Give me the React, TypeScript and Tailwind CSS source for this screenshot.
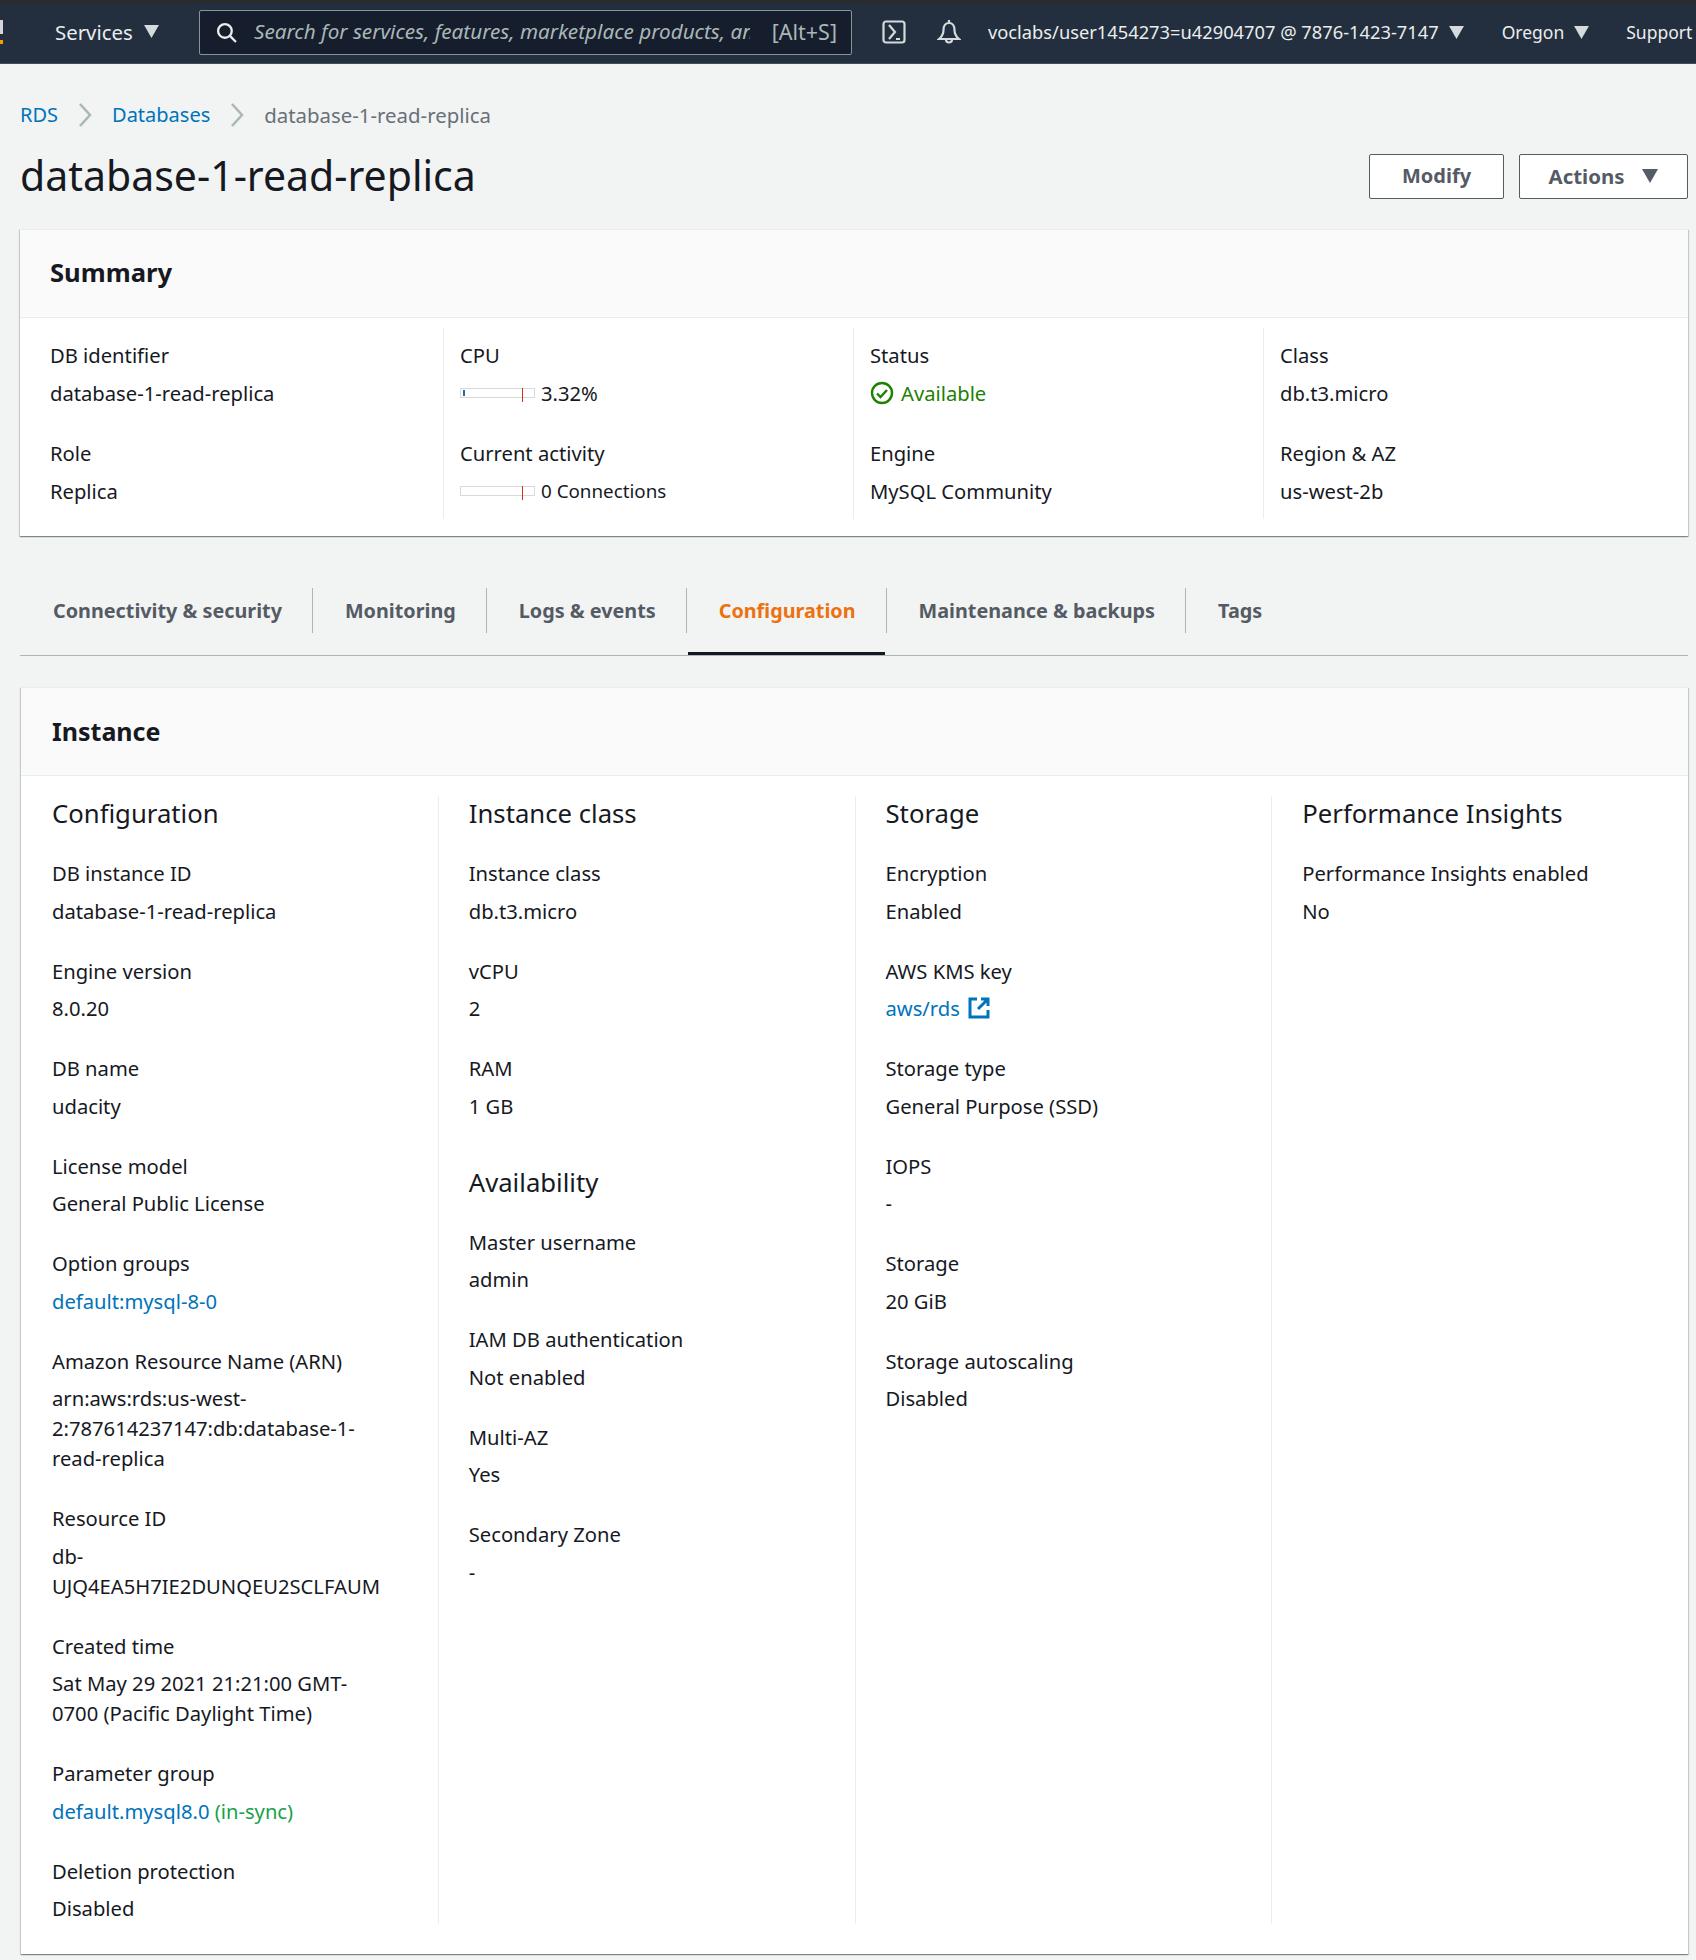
const font = "font-['Noto_Sans',sans-serif]"

function Caret({ className }: { className: string }) {
  return (
    <svg viewBox="0 0 16 14" className={className} fill="currentColor">
      <polygon points="0,0 16,0 8,14" />
    </svg>
  )
}

function Chevron() {
  return (
    <svg viewBox="0 0 14 24" className="w-[14px] h-[24px] text-[#aab7b8] mx-5" fill="none" stroke="currentColor" strokeWidth="2.5">
      <path d="M2 1l10 11-10 11" />
    </svg>
  )
}

function NavBar() {
  return (
    <div className="h-[64px] pb-[2px] bg-[#232f3e] border-t-[3px] border-t-[#2b2b2b] border-b border-b-[#414d5c] flex items-center text-[#eaeded] text-[17.5px] overflow-hidden whitespace-nowrap">
      <div className="w-[3px] h-[30px] flex flex-col justify-center gap-[6px] shrink-0">
        <div className="h-[14px] bg-white opacity-80" />
        <div className="h-[4px] bg-[#ff9900]" />
      </div>
      <div className="ml-[52px] flex items-center w-[104px] shrink-0">
        <span className="text-[20.4px]">Services</span>
        <Caret className="w-[15px] h-[13px] ml-[11px] text-[#d5dbdb]" />
      </div>
      <div className="ml-[40px] w-[653px] h-[45px] shrink-0 bg-[#161e2d] border border-[#879596] rounded-[2px] flex items-center pl-[16px] pr-[14px]">
        <svg viewBox="0 0 20 20" className="w-[21px] h-[21px] shrink-0 text-[#eaeded]" fill="none" stroke="currentColor" strokeWidth="2.2">
          <circle cx="8.5" cy="8.5" r="6.5" />
          <path d="M13.5 13.5l5.500 5.500" />
        </svg>
        <span className="ml-[17px] w-[496px] overflow-hidden italic text-[#aab7b8] text-[20.7px]">Search for services, features, marketplace products, and docs</span>
        <span className="ml-auto text-[#aab7b8] text-[21.5px]">[Alt+S]</span>
      </div>
      <svg viewBox="0 0 24 24" className="ml-[30px] w-[24px] h-[24px] shrink-0 text-[#d5dbdb]" fill="none" stroke="currentColor" strokeWidth="2.2">
        <rect x="1.500" y="1.500" width="21" height="21" rx="2.500" />
        <path d="M7 5l6 7-6 7M14 19h4" />
      </svg>
      <svg viewBox="0 0 24 27" className="ml-[31px] w-[24px] h-[27px] shrink-0 text-[#d5dbdb]" fill="none" stroke="currentColor" strokeWidth="2.2">
        <path d="M12 1v3M12 4c-3.500 0-5.500 3-5.500 7 0 4-2 7-4.500 9h20c-2.500-2-4.500-5-4.500-9 0-4-2-7-5.500-7z" />
        <path d="M9 20.500a3 3 0 0 0 6 0" />
      </svg>
      <span className="ml-[27px] text-[18.3px]">voclabs/user1454273=u42904707 @ 7876-1423-7147</span>
      <Caret className="w-[15px] h-[13px] ml-[10px] text-[#d5dbdb]" />
      <span className="ml-[38px]">Oregon</span>
      <Caret className="w-[15px] h-[13px] ml-[10px] text-[#d5dbdb]" />
      <span className="ml-[37px]">Support</span>
    </div>
  )
}

function Header() {
  return (
    <div className="px-5 pt-[36px]">
      <div className="flex items-center h-[30px] text-[20px]">
        <a className="text-[#0073bb]">RDS</a>
        <Chevron />
        <a className="text-[#0073bb]">Databases</a>
        <Chevron />
        <span className="text-[#687078] text-[20.4px]">database-1-read-replica</span>
      </div>
      <div className="flex items-center justify-between mt-[20px]">
        <h1 className="text-[41px] leading-[50px] text-[#16191f]">database-1-read-replica</h1>
        <div className="flex gap-[15px] -mr-[12px] pt-[2px]">
          <button className="w-[135px] h-[45px] bg-white border border-[#545b64] rounded-[2px] text-[#545b64] text-[20px] font-bold">Modify</button>
          <button className="w-[169px] h-[45px] bg-white border border-[#545b64] rounded-[2px] text-[#545b64] text-[20.4px] font-bold flex items-center justify-center gap-[18px]">
            Actions
            <Caret className="w-[16px] h-[14px]" />
          </button>
        </div>
      </div>
    </div>
  )
}

function Bar({ fill }: { fill?: boolean }) {
  return (
    <div className="relative w-[75px] h-[10px] border border-[#d5dbdb] bg-white mr-[6px]">
      {fill && <div className="absolute left-[2px] top-[1px] w-[2px] h-[6px] bg-[#2e6a9e]" />}
      <div className="absolute left-[61px] -top-[1px] w-px h-[14px] bg-[#d13212]" />
    </div>
  )
}

function SummaryField({ label, children }: { label: string; children: React.ReactNode }) {
  return (
    <div className="h-[98px]">
      <div className="h-[30px] leading-[30px]">{label}</div>
      <div className="mt-[8px] h-[30px] leading-[30px] flex items-center">{children}</div>
    </div>
  )
}

function Summary() {
  const cols = [
    [
      ["DB identifier", "database-1-read-replica"],
      ["Role", "Replica"],
    ],
    [
      ["CPU", <><Bar fill /> 3.32%</>],
      ["Current activity", <><Bar /> <span className="text-[18.8px]">0 Connections</span></>],
    ],
    [
      ["Status", (
        <span className="flex items-center text-[#1d8102]">
          <svg viewBox="0 0 24 24" className="w-[24px] h-[24px] mr-[7px]" fill="none" stroke="currentColor" strokeWidth="2.4">
            <circle cx="12" cy="12" r="10" />
            <path d="M7 12.500l3.500 3.500 6.500-7" />
          </svg>
          Available
        </span>
      )],
      ["Engine", "MySQL Community"],
    ],
    [
      ["Class", "db.t3.micro"],
      ["Region & AZ", "us-west-2b"],
    ],
  ] as [string, React.ReactNode][][]

  return (
    <div className="ml-5 mr-2 mt-[29px] bg-white border-t border-[#eaeded] shadow-[0_1px_1px_0_rgba(0,28,36,0.3),1px_1px_1px_0_rgba(0,28,36,0.15),-1px_1px_1px_0_rgba(0,28,36,0.15)]">
      <div className="h-[88px] bg-[#fafafa] border-b border-[#eaeded] flex items-center px-[30px]">
        <h2 className="text-[25.6px] font-bold text-[#16191f]">Summary</h2>
      </div>
      <div className="grid grid-cols-[423px_410px_410px_1fr] pt-[10px] pb-[17px] text-[#16191f] text-[20.2px]">
        {cols.map((col, i) => (
          <div key={i} className={i === 0 ? "pl-[30px] pt-[12px] h-[191px]" : "pl-[16px] pt-[12px] border-l border-[#eaeded] h-[191px]"}>
            {col.map(([label, value]) => (
              <SummaryField key={label} label={label}>{value}</SummaryField>
            ))}
          </div>
        ))}
      </div>
    </div>
  )
}

function Tabs() {
  const tabs = ["Connectivity & security", "Monitoring", "Logs & events", "Configuration", "Maintenance & backups", "Tags"]
  return (
    <div className="ml-5 mr-2 h-[120px] border-b border-[#aab7b8] flex items-end">
      {tabs.map((tab, i) => (
        <div key={tab} className={tab === "Configuration" ? "relative h-[86px]" : "h-[86px]"}>
          <div className={i === 0 ? "h-[45px] mt-[19px] flex items-center pl-[33px] pr-[30px] text-[19.8px] font-bold text-[#545b64]" : tab === "Configuration" ? "h-[45px] mt-[19px] flex items-center pl-[32px] pr-[30px] border-l border-[#aab7b8] text-[19.8px] font-bold text-[#ec7211]" : "h-[45px] mt-[19px] flex items-center pl-[32px] pr-[30px] border-l border-[#aab7b8] text-[19.8px] font-bold text-[#545b64]"}>
            {tab}
          </div>
          {tab === "Configuration" && <div className="absolute left-[2px] right-[1px] bottom-0 h-[3px] bg-[#16191f]" />}
        </div>
      ))}
    </div>
  )
}

type Item = { label: string; value: React.ReactNode }

function Field({ label, value }: Item) {
  return (
    <div className="mb-[30px]">
      <div className="h-[30px] leading-[30px]">{label}</div>
      <div className="mt-[7.5px] leading-[30px]">{value}</div>
    </div>
  )
}

function Section({ title, items }: { title: string; items: Item[] }) {
  return (
    <div>
      <h3 className="text-[25.7px] leading-[35px] text-[#16191f] mb-[27px]">{title}</h3>
      {items.map((item) => <Field key={item.label} {...item} />)}
    </div>
  )
}

const link = "text-[#0073bb]"

function Instance() {
  return (
    <div className="ml-[21px] mr-2 mt-[31px] bg-white border-t border-[#eaeded] shadow-[0_1px_1px_0_rgba(0,28,36,0.3),1px_1px_1px_0_rgba(0,28,36,0.15),-1px_1px_1px_0_rgba(0,28,36,0.15)]">
      <div className="h-[88px] bg-[#fafafa] border-b border-[#eaeded] flex items-center pl-[31px] pr-[30px]">
        <h2 className="text-[25px] font-bold text-[#16191f]">Instance</h2>
      </div>
      <div className="grid grid-cols-4 pt-[20px] pb-[30px] text-[20.2px] text-[#16191f]">
        <div className="pl-[31px] pr-[50px] h-[1128px]">
          <Section title="Configuration" items={[
            { label: "DB instance ID", value: "database-1-read-replica" },
            { label: "Engine version", value: "8.0.20" },
            { label: "DB name", value: "udacity" },
            { label: "License model", value: "General Public License" },
            { label: "Option groups", value: <a className={link}>default:mysql-8-0</a> },
            { label: "Amazon Resource Name (ARN)", value: "arn:aws:rds:us-west-2:787614237147:db:database-1-read-replica" },
            { label: "Resource ID", value: "db-UJQ4EA5H7IE2DUNQEU2SCLFAUM" },
            { label: "Created time", value: "Sat May 29 2021 21:21:00 GMT-0700 (Pacific Daylight Time)" },
            { label: "Parameter group", value: <><a className={link}>default.mysql8.0</a> <span className="text-[#1aa14a]">(in-sync)</span></> },
            { label: "Deletion protection", value: "Disabled" },
          ]} />
        </div>
        <div className="pl-[30px] pr-[30px] border-l border-[#eaeded]">
          <Section title="Instance class" items={[
            { label: "Instance class", value: "db.t3.micro" },
            { label: "vCPU", value: "2" },
            { label: "RAM", value: "1 GB" },
          ]} />
          <div className="mt-[44px]">
            <Section title="Availability" items={[
              { label: "Master username", value: "admin" },
              { label: "IAM DB authentication", value: "Not enabled" },
              { label: "Multi-AZ", value: "Yes" },
              { label: "Secondary Zone", value: "-" },
            ]} />
          </div>
        </div>
        <div className="pl-[30px] pr-[30px] border-l border-[#eaeded]">
          <Section title="Storage" items={[
            { label: "Encryption", value: "Enabled" },
            { label: "AWS KMS key", value: (
              <a className="text-[#0073bb] inline-flex items-center">
                aws/rds
                <svg viewBox="0 0 22 22" className="w-[22px] h-[22px] ml-[8px]" fill="none" stroke="currentColor" strokeWidth="3">
                  <path d="M9 2H2v18h18v-7M13 2h7v7M20 2L10 12" />
                </svg>
              </a>
            ) },
            { label: "Storage type", value: "General Purpose (SSD)" },
            { label: "IOPS", value: "-" },
            { label: "Storage", value: "20 GiB" },
            { label: "Storage autoscaling", value: "Disabled" },
          ]} />
        </div>
        <div className="pl-[30px] pr-[30px] border-l border-[#eaeded]">
          <Section title="Performance Insights" items={[
            { label: "Performance Insights enabled", value: "No" },
          ]} />
        </div>
      </div>
    </div>
  )
}

export default function App() {
  return (
    <div className={`${font} bg-[#f2f3f3] h-[1960px] overflow-hidden`}>
      <NavBar />
      <Header />
      <Summary />
      <Tabs />
      <Instance />
    </div>
  )
}
